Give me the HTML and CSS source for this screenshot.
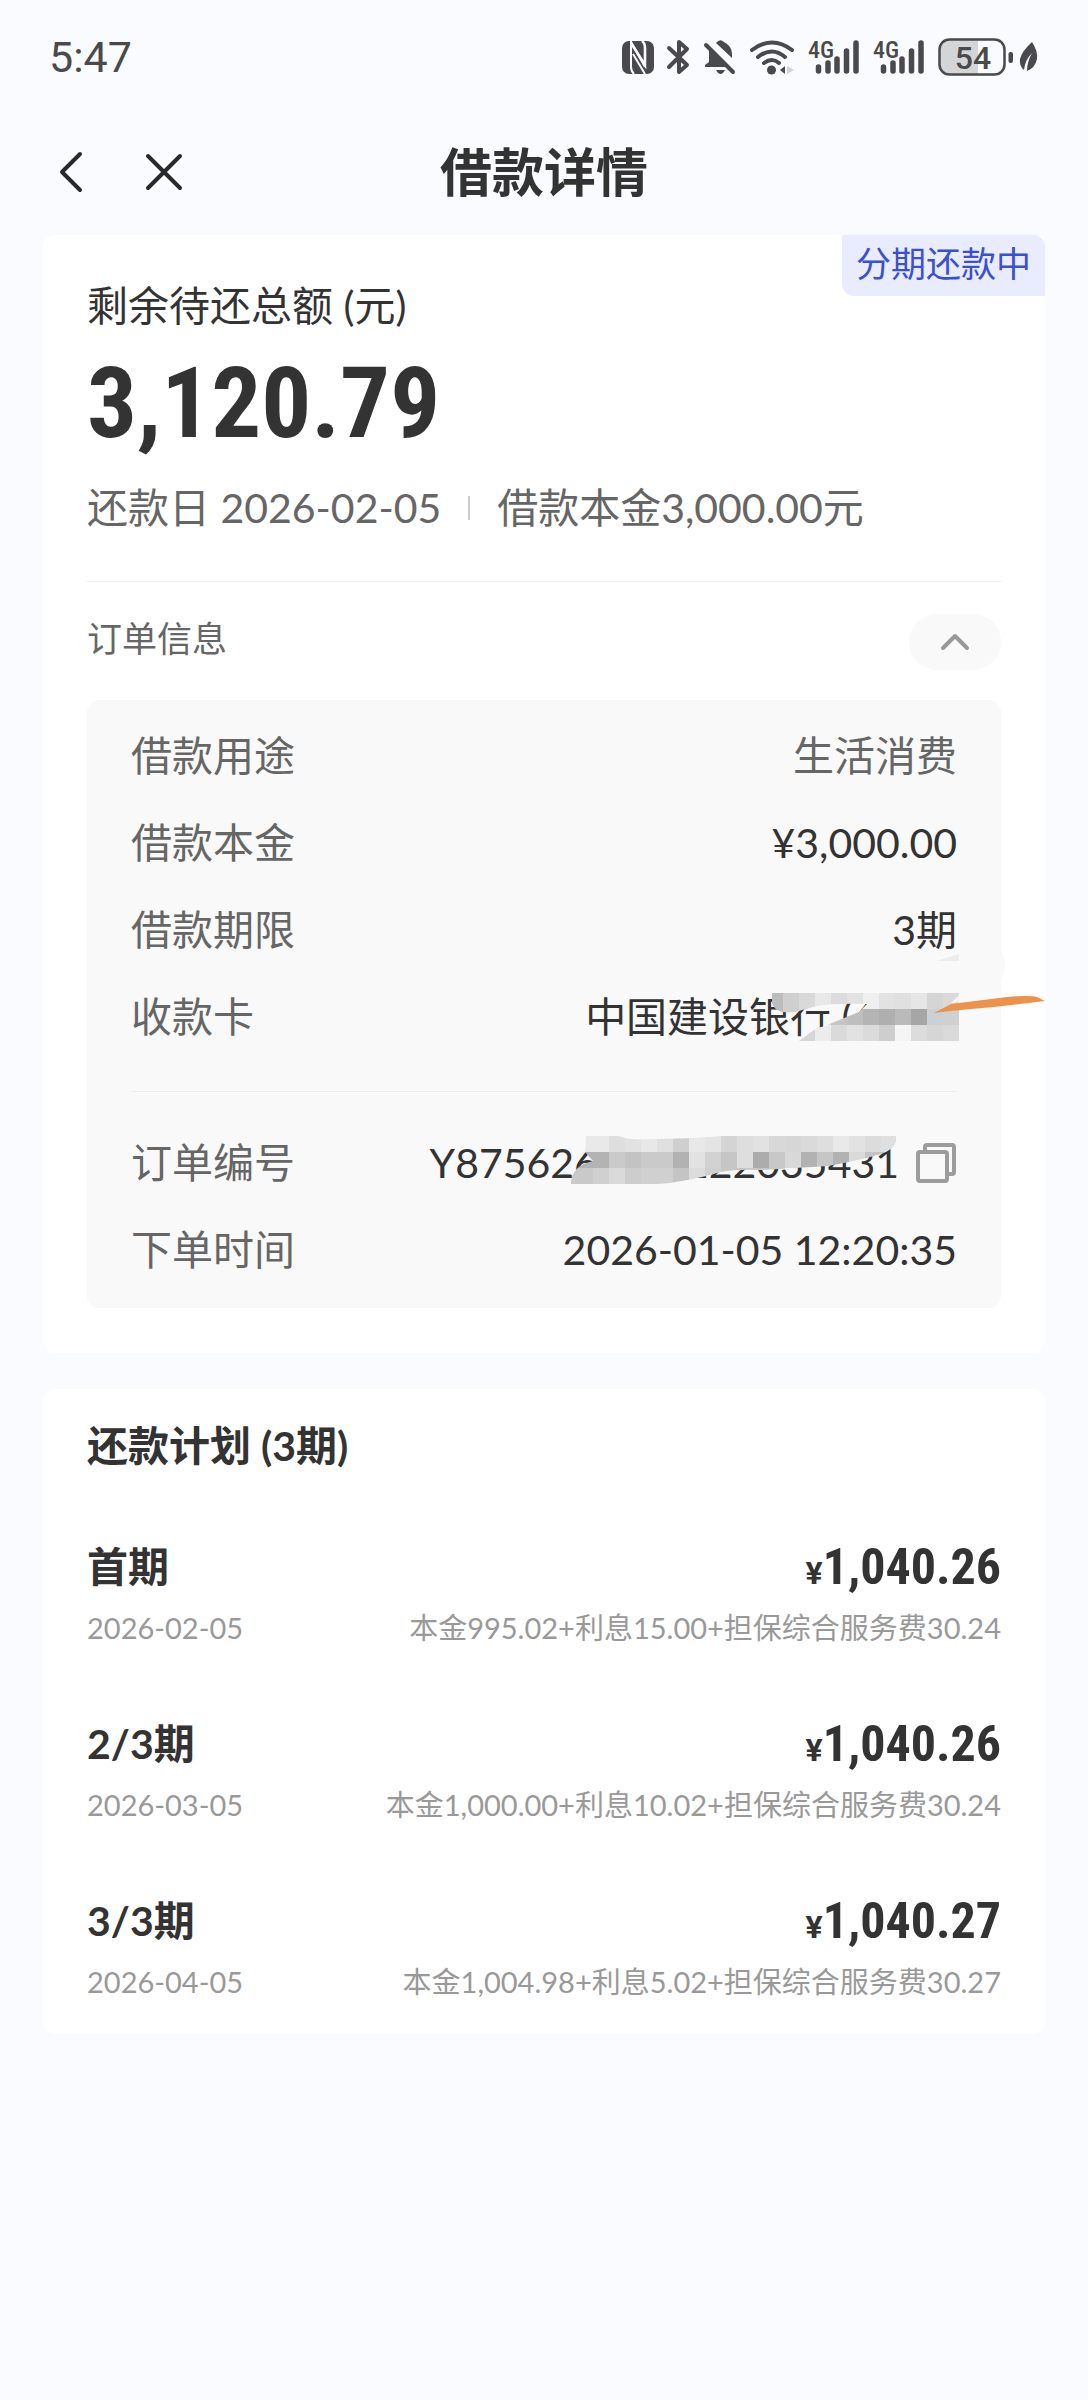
FILE: index.html
```html
<!DOCTYPE html>
<html lang="zh-CN">
<head>
<meta charset="utf-8">
<meta name="viewport" content="width=device-width, initial-scale=1">
<title>借款详情</title>
<link rel="stylesheet" href="styles.css">
</head>
<body>
<div class="status-bar">
  <time class="clock">5:47</time>
  <div class="status-icons">
    <svg width="32" height="40" viewBox="0 0 32 40" aria-hidden="true">
      <rect x="0" y="4" width="32" height="33" rx="7" fill="#4a4a4c"/>
      <path d="M9 4V30Q9 34 12 37M9 5L23 30M11 17L23 37" fill="none" stroke="#fafbff" stroke-width="2"/>
      <path d="M9 6L23 28V11Q23 6 20 4" fill="none" stroke="#fafbff" stroke-width="2.600"/>
    </svg>
    <svg width="24" height="40" viewBox="0 0 24 40" aria-hidden="true">
      <path d="M2 11L20 28L12 35V5L20 12L2 30" fill="none" stroke="#4a4a4c" stroke-width="4" stroke-linecap="round" stroke-linejoin="round"/>
    </svg>
    <svg width="32" height="40" viewBox="0 0 32 40" aria-hidden="true">
      <path d="M5 11L25 30H1V28L5 25ZM12 6Q16 1 20 5Q28 9 28 17V21L12 6ZM12 33H21Q19 37 16.500 37Q14 37 12 33Z" fill="#4a4a4c"/>
      <path d="M2 8L29 35" stroke="#4a4a4c" stroke-width="4" stroke-linecap="round"/>
    </svg>
    <svg width="46" height="40" viewBox="0 0 46 40" aria-hidden="true">
      <g fill="none" stroke="#4a4a4c" stroke-width="4" stroke-linecap="round">
        <path d="M3 13Q23 -2 43 13"/><path d="M9 20Q23 9 36 20"/><path d="M15 26Q23 20 30 26"/>
      </g>
      <circle cx="22.500" cy="33" r="4.500" fill="#4a4a4c"/>
      <path d="M36 29V37L31 33Z" fill="#4a4a4c"/>
      <path d="M38 29V37L45 33Z" fill="#d2d3d6"/>
    </svg>
    <svg class="signal" width="52" height="40" viewBox="0 0 52 40" aria-hidden="true">
      <text x="0" y="21">4G</text>
      <path d="M10.500 30V34M20 26V34M29 22V34M38.500 14V34M48 6V34" stroke="#4a4a4c" stroke-width="5.500" stroke-linecap="round"/>
    </svg>
    <svg class="signal" width="52" height="40" viewBox="0 0 52 40" aria-hidden="true">
      <text x="0" y="21">4G</text>
      <path d="M10.500 30V34M20 26V34M29 22V34M38.500 14V34M48 6V34" stroke="#4a4a4c" stroke-width="5.500" stroke-linecap="round"/>
    </svg>
    <span class="battery">
      <svg width="76" height="40" viewBox="0 0 76 40" aria-hidden="true">
        <path d="M11 3H40V37H11Q2 37 2 28V12Q2 3 11 3Z" fill="#d4d5d7"/>
        <rect x="1.500" y="2.500" width="65" height="35" rx="10" fill="none" stroke="#4a4a4c" stroke-width="2.500"/>
        <rect x="70.500" y="15" width="4.500" height="11" rx="2" fill="#4a4a4c"/>
        <text x="35" y="32" text-anchor="middle">54</text>
      </svg>
      <svg width="20" height="40" viewBox="0 0 20 40" aria-hidden="true">
        <path d="M13 5Q19 14 18 22Q16 31 8 34Q8 25 13 16Q6 23 5 33Q0 29 1 22Q3 14 13 5Z" fill="#4a4a4c"/>
      </svg>
    </span>
  </div>
</div>

<header class="nav">
  <div class="nav-actions">
    <button class="icon-button" type="button" aria-label="返回">
      <svg width="24" height="40" viewBox="0 0 24 40"><path d="M21 2L3 20L21 38" fill="none" stroke="#29292b" stroke-width="4" stroke-linecap="round" stroke-linejoin="round"/></svg>
    </button>
    <button class="icon-button" type="button" aria-label="关闭">
      <svg width="38" height="40" viewBox="0 0 38 40"><path d="M3 4L35 36M35 4L3 36" fill="none" stroke="#29292b" stroke-width="4" stroke-linecap="round"/></svg>
    </button>
  </div>
  <h1>借款详情</h1>
</header>

<main>
  <section class="card summary">
    <span class="badge">分期还款中</span>
    <p class="label">剩余待还总额 (元)</p>
    <p class="total">3,120.79</p>
    <p class="meta"><span>还款日 2026-02-05</span><span class="bar"></span><span>借款本金3,000.00元</span></p>
    <div class="order-head">
      <h2>订单信息</h2>
      <button class="toggle" type="button" aria-label="收起">
        <svg width="30" height="20" viewBox="0 0 30 20"><path d="M3 16L15 4L27 16" fill="none" stroke="#999" stroke-width="4" stroke-linecap="round" stroke-linejoin="round"/></svg>
      </button>
    </div>
    <div class="panel">
      <dl class="rows">
        <div><dt>借款用途</dt><dd class="muted">生活消费</dd></div>
        <div><dt>借款本金</dt><dd>¥3,000.00</dd></div>
        <div><dt>借款期限</dt><dd>3期</dd></div>
        <div><dt>收款卡</dt><dd class="masked">中国建设银行 (6****)
          <svg class="mask-card" width="280" height="104" viewBox="0 0 280 104" aria-hidden="true">
            <clipPath id="cardClip"><path d="M5 48H192V96H32Q44 87 50 83Q58 82 65 78Q82 71 92 67L100 59Q70 58 49 61Q36 65 27 67Q8 69 5 58Z"/></clipPath>
            <g clip-path="url(#cardClip)">
              <path d="M0 48h16v24h-16z" fill="#bdbdbd"/><path d="M16 48h16v24h-16z" fill="#cfcfcf"/><path d="M32 48h16v24h-16z" fill="#d9d9d9"/><path d="M48 48h16v24h-16z" fill="#e8e8e8"/><path d="M64 48h16v16h-16z" fill="#dcdcdc"/><path d="M80 48h16v16h-16z" fill="#e2e2e2"/><path d="M96 48h16v16h-16z" fill="#efefef"/><path d="M112 48h16v16h-16z" fill="#e2e2e2"/><path d="M128 48h16v16h-16z" fill="#e0e0e0"/><path d="M144 48h16v16h-16z" fill="#e6e6e6"/><path d="M160 48h16v16h-16z" fill="#d5d5d5"/><path d="M176 48h16v16h-16z" fill="#dadada"/>
              <path d="M48 70h16v10h-16z" fill="#d6d6d6"/><path d="M64 64h16v16h-16z" fill="#c6c6c6"/><path d="M80 64h16v16h-16z" fill="#bebebe"/><path d="M96 64h16v16h-16z" fill="#b4b4b4"/><path d="M112 64h16v16h-16z" fill="#afafaf"/><path d="M128 64h16v16h-16z" fill="#bababa"/><path d="M144 64h16v16h-16z" fill="#a6a6a6"/><path d="M160 64h16v16h-16z" fill="#cdd0d2"/><path d="M176 64h16v16h-16z" fill="#d0d0d0"/>
              <path d="M32 80h16v16h-16z" fill="#d6d6d6"/><path d="M48 80h16v16h-16z" fill="#ececec"/><path d="M64 80h16v16h-16z" fill="#dadada"/><path d="M80 80h16v16h-16z" fill="#e2e2e2"/><path d="M96 80h16v16h-16z" fill="#dbdbdb"/><path d="M112 80h16v16h-16z" fill="#cecece"/><path d="M128 80h16v16h-16z" fill="#f5f5f5"/><path d="M144 80h16v16h-16z" fill="#dcdcdc"/><path d="M160 80h16v16h-16z" fill="#d6d6d6"/><path d="M176 80h16v16h-16z" fill="#dadada"/>
            </g>
            <path d="M169 16L192 9V16Z" fill="#ededed"/>
            <path d="M234 6Q242 20 234 34Z" fill="#f9f9f9"/>
            <path d="M184 58L192 50V57Z" fill="#f6f6f6"/>
            <path d="M167 68L184 59L240 52Q262 50 270 52L278 56L227 62Q190 65 167 68Z" fill="#ec924c"/>
          </svg></dd></div>
      </dl>
      <dl class="rows">
        <div><dt>订单编号</dt><dd class="order-number"><span class="masked">Y875626*****122035431
          <svg class="mask-order" width="344" height="60" viewBox="0 0 344 60" aria-hidden="true">
            <clipPath id="orderClip"><path d="M25 8H58Q66 12 83 11Q130 11 160 8H335V14Q332 22 320 26Q300 32 267 38L200 42Q176 41 160 44Q125 54 97 56H10Q10 38 32 33L24 24Z"/></clipPath>
            <g clip-path="url(#orderClip)">
              <path d="M16 8h32v16h-32z" fill="#e9e9e9"/><path d="M48 8h16v16h-16z" fill="#dedede"/><path d="M64 8h16v16h-16z" fill="#e2e2e2"/><path d="M80 8h16v16h-16z" fill="#e8e8e8"/><path d="M96 8h16v16h-16z" fill="#e0e0e0"/><path d="M112 8h16v16h-16z" fill="#cfcfcf"/><path d="M128 8h16v16h-16z" fill="#e8e8e8"/><path d="M144 8h16v16h-16z" fill="#e4e4e4"/><path d="M160 8h16v16h-16z" fill="#d4d4d4"/><path d="M176 8h16v16h-16z" fill="#dedede"/><path d="M192 8h16v16h-16z" fill="#e2e2e2"/><path d="M208 8h16v16h-16z" fill="#d8d8d8"/><path d="M224 8h16v16h-16z" fill="#d6d6d6"/><path d="M240 8h16v16h-16z" fill="#dadada"/><path d="M256 8h16v16h-16z" fill="#dedede"/><path d="M272 8h16v16h-16z" fill="#e9e9e9"/><path d="M288 8h16v16h-16z" fill="#e2e2e2"/><path d="M304 8h16v16h-16z" fill="#dcdcdc"/><path d="M320 8h16v16h-16z" fill="#dfdfdf"/>
              <path d="M16 24h32v16h-32z" fill="#b3b3b3"/><path d="M48 24h16v16h-16z" fill="#cacaca"/><path d="M64 24h16v16h-16z" fill="#c3c3c3"/><path d="M80 24h32v16h-32z" fill="#cacaca"/><path d="M112 24h16v16h-16z" fill="#b2b2b2"/><path d="M128 24h16v16h-16z" fill="#e2e2e2"/><path d="M144 24h16v16h-16z" fill="#d2d2d2"/><path d="M160 24h16v16h-16z" fill="#c6c6c6"/><path d="M176 24h16v16h-16z" fill="#dedede"/><path d="M192 24h16v16h-16z" fill="#acacac"/><path d="M208 24h16v16h-16z" fill="#c8c8c8"/><path d="M224 24h16v16h-16z" fill="#d8d8d8"/><path d="M240 24h16v16h-16z" fill="#b2b2b2"/><path d="M256 24h16v16h-16z" fill="#c6c6c6"/><path d="M272 24h16v16h-16z" fill="#b2b2b2"/><path d="M288 24h16v16h-16z" fill="#dadada"/><path d="M304 24h32v16h-32z" fill="#c4c4c4"/>
              <path d="M0 40h32v16h-32z" fill="#c9c9c9"/><path d="M32 40h16v16h-16z" fill="#d0d0d0"/><path d="M48 40h16v16h-16z" fill="#dadada"/><path d="M64 40h16v16h-16z" fill="#cdcdcd"/><path d="M80 40h32v16h-32z" fill="#d0d0d0"/><path d="M112 40h16v16h-16z" fill="#c4c4c4"/><path d="M128 40h16v16h-16z" fill="#dcdcdc"/><path d="M144 40h16v16h-16z" fill="#cfcfcf"/><path d="M160 40h64v16h-64z" fill="#c6c6c6"/>
            </g>
          </svg></span>
          <button class="icon-button" type="button" aria-label="复制订单编号">
            <svg width="42" height="42" viewBox="0 0 42 42"><path d="M10 9V5Q10 3 12 3H37Q39 3 39 5V30Q39 32 37 32H32" fill="none" stroke="#9c9c9c" stroke-width="4"/><rect x="3" y="10" width="29" height="29" rx="2" fill="none" stroke="#9c9c9c" stroke-width="4"/></svg>
          </button></dd></div>
        <div><dt>下单时间</dt><dd>2026-01-05 12:20:35</dd></div>
      </dl>
    </div>
  </section>

  <section class="card plan">
    <h2>还款计划 (3期)</h2>
    <ul>
      <li>
        <div class="line"><h3>首期</h3><strong><span class="yen">¥</span>1,040.26</strong></div>
        <div class="line detail"><time>2026-02-05</time><span>本金995.02+利息15.00+担保综合服务费30.24</span></div>
      </li>
      <li>
        <div class="line"><h3>2/3期</h3><strong><span class="yen">¥</span>1,040.26</strong></div>
        <div class="line detail"><time>2026-03-05</time><span>本金1,000.00+利息10.02+担保综合服务费30.24</span></div>
      </li>
      <li>
        <div class="line"><h3>3/3期</h3><strong><span class="yen">¥</span>1,040.27</strong></div>
        <div class="line detail"><time>2026-04-05</time><span>本金1,004.98+利息5.02+担保综合服务费30.27</span></div>
      </li>
    </ul>
  </section>
</main>
</body>
</html>
```
FILE: styles.css
```css
* { box-sizing: border-box; margin: 0; padding: 0; }

body {
  min-height: 100vh;
  background: #fafbff;
  color: #333;
  font: 41px/48px Lato, "Noto Sans CJK SC", sans-serif;
}

ul { list-style: none; }
svg { display: block; flex: none; overflow: visible; }

.icon-button { display: flex; border: 0; background: none; }

/* Status bar */
.status-bar {
  display: flex;
  align-items: center;
  justify-content: space-between;
  padding: 33px 49px 0 49px;
}
.clock { color: #4a4a4c; font: 43px/48px Roboto, sans-serif; }
.status-icons { display: flex; align-items: center; gap: 13px; }
.status-icons text { fill: #4a4a4c; }
.signal text { font: 500 24px/24px "Roboto Condensed", sans-serif; }
.battery { display: flex; gap: 5px; }
.battery text { font: 500 32px/32px Roboto, sans-serif; }

/* Navigation */
.nav {
  display: grid;
  grid-template-columns: 1fr auto 1fr;
  align-items: center;
  padding: 55px 59px 27px;
}
.nav-actions { display: flex; gap: 62px; }
.nav h1 { font-size: 52px; line-height: 72px; font-weight: 700; }

/* Cards */
main { display: grid; gap: 36px; padding: 0 43px; }
.card { position: relative; border-radius: 12px; background: #fff; }
.summary { padding: 47px 44px 45px; }

.badge {
  position: absolute;
  top: 0;
  right: 0;
  padding: 4px 14px 9px;
  border-radius: 0 12px;
  background: #e9ecfe;
  color: #3b4fd0;
  font-size: 35px;
}
.total {
  padding: 22px 0 30px;
  font: 700 99px/102px "Roboto Condensed", Roboto, sans-serif;
}
.meta {
  display: flex;
  align-items: center;
  gap: 27px;
  padding-bottom: 49px;
  border-bottom: 1px solid #eee;
  color: #666;
}
.bar { width: 2px; height: 24px; background: #ccc; }

.order-head {
  display: flex;
  align-items: flex-start;
  justify-content: space-between;
  padding: 32px 0 30px;
}
.order-head h2 { color: #666; font-size: 35px; font-weight: 400; }
.toggle {
  display: grid;
  place-items: center;
  width: 92px;
  height: 56px;
  border: 0;
  border-radius: 28px;
  background: #f9f9f9;
}

/* Order details */
.panel { padding: 32px 44px 34px; border-radius: 12px; background: #f9f9f9; }
.rows { display: grid; gap: 39px; }
.rows + .rows { margin-top: 50px; padding-top: 47px; border-top: 1px solid #eee; }
.rows > div { display: flex; justify-content: space-between; }
.rows dt, .muted { color: #666; }
.order-number { display: flex; align-items: center; gap: 16px; }
.masked { position: relative; }
.mask-card, .mask-order { position: absolute; }
.mask-card { top: -48px; right: -90px; }
.mask-order { top: -11px; right: -6px; }

/* Repayment plan */
.plan { padding: 33px 44px 32px; }
.plan h2 { font-size: 41px; font-weight: 700; }
.plan ul { display: grid; gap: 68px; padding-top: 69px; }
.plan li { display: grid; gap: 13px; }
.line { display: flex; align-items: center; justify-content: space-between; line-height: 56px; }
.line h3 { font-size: 41px; font-weight: 700; }
.line strong { font: 700 50px/56px "Roboto Condensed", Roboto, sans-serif; }
.line .yen { font: 700 32px/24px Roboto, sans-serif; }
.line.detail { color: #999; font-size: 29px; line-height: 40px; }
```
